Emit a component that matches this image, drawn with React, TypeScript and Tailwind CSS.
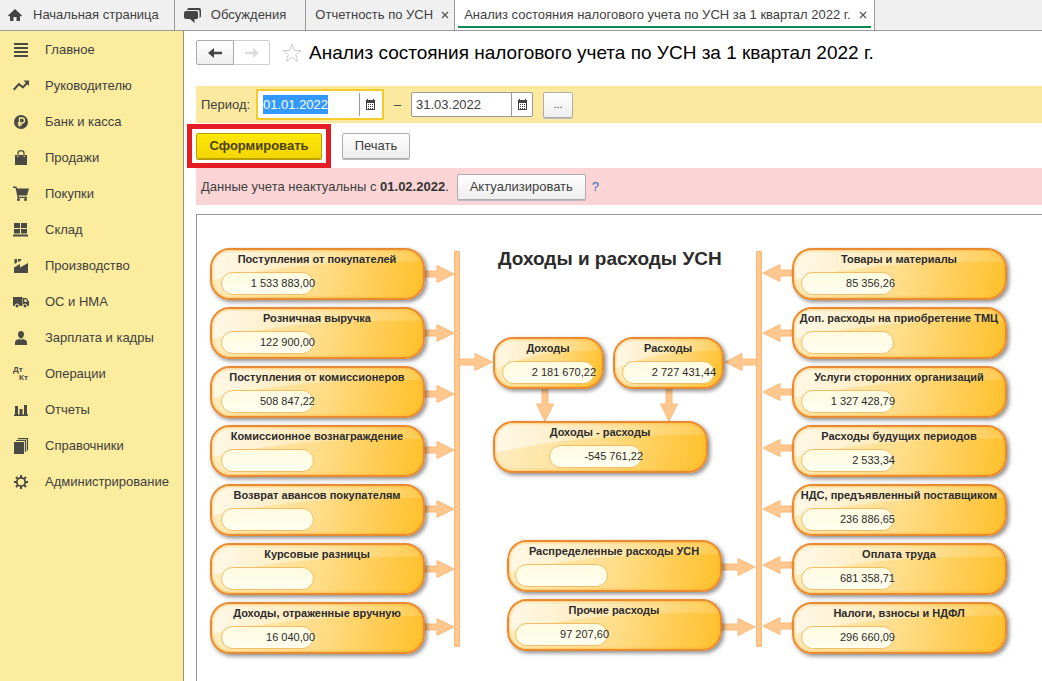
import { useEffect, useRef, type ReactNode } from 'react';

const menu: { label: string; icon: ReactNode }[] = [
    { label: 'Главное', icon: <path d="M1 1h14v2H1zM1 5h14v2H1zM1 9h14v2H1zM1 13h14v2H1z" /> },
    { label: 'Руководителю', icon: <path d="M10.500 2.500H16V8l-1.700-1.700-4.300 4.500L6 7.500 1.500 12.500 0 11l5.800-6.300L10 8l2.700-3.200z" /> },
    {
        label: 'Банк и касса',
        icon: (
            <>
                <circle cx="8" cy="8" r="7" />
                <path d="M6.500 12.500V4h2.500a2.300 2.300 0 0 1 0 5H4.800M4.800 10.800H9" fill="none" stroke="#fbec9e" strokeWidth="1.300" />
            </>
        ),
    },
    {
        label: 'Продажи',
        icon: (
            <>
                <path d="M2 5h2v2h1.500v-2h5v2H12v-2h2V15H2z" />
                <path d="M5 6.500V3Q5 .6 8 .6T11 3v3.500" fill="none" stroke="currentColor" strokeWidth="1.200" />
            </>
        ),
    },
    {
        label: 'Покупки',
        icon: (
            <>
                <path d="M0 .5h3.500l.6 2H16l-2 7H5.500l.3 1.300H14V12H4.600L2.600 2H0z" />
                <circle cx="5.500" cy="13.500" r="1.500" />
                <circle cx="12.500" cy="13.500" r="1.500" />
            </>
        ),
    },
    { label: 'Склад', icon: <path d="M1 1h6v5H1zM8 1h6v5H8zM1 7h6v4.500H1zM8 7h6v4.500H8zM0 12.500h15v2H0z" /> },
    { label: 'Производство', icon: <path d="M1 9.500l6-3.500V9.500L15 5v10H1zM1.500 1H4v3.500L1.500 6zM5 1h3.500l-1 2L5 4z" /> },
    {
        label: 'ОС и НМА',
        icon: (
            <>
                <path d="M0 3h9.500v9H0zM10 4h3.500L16 7.500V12h-6z" />
                <path d="M11.300 5.300h1.700l1.500 2.400h-3.200z" fill="#fbec9e" />
                <circle cx="4" cy="12" r="2" stroke="#fbec9e" />
                <circle cx="12" cy="12" r="2" stroke="#fbec9e" />
            </>
        ),
    },
    { label: 'Зарплата и кадры', icon: <path d="M8 1c2 0 3 1.400 3 3.200S9.700 8.500 8 8.500 5 6 5 4.200 6 1 8 1zM2 15v-2.500C2 10 4.500 9.500 6 9q2 1.500 4 0c1.500.5 4 1 4 3.500V15z" /> },
    {
        label: 'Операции',
        icon: (
            <g fontFamily="Liberation Sans, sans-serif" fontWeight="700" fontSize="8">
                <text x="0" y="6">Дт</text>
                <text x="6" y="14">Кт</text>
            </g>
        ),
    },
    { label: 'Отчеты', icon: <path d="M1 12.500h14V14H1zM2 4h3v9H2zM6.500 7h3v6h-3zM11 3h3v10h-3z" /> },
    {
        label: 'Справочники',
        icon: (
            <>
                <path d="M1 4h10v12H1z" />
                <path d="M3 2.500h9.500V14M5 .6h9.500V12.500" fill="none" stroke="currentColor" strokeWidth="1.200" />
            </>
        ),
    },
    {
        label: 'Администрирование',
        icon: (
            <>
                <circle cx="8" cy="8" r="4.200" fill="none" stroke="currentColor" strokeWidth="1.800" />
                <path d="M8 1v3M8 12v3M1 8h3M12 8h3M3 3l2 2M11 11l2 2M13 3l-2 2M5 11l-2 2" stroke="currentColor" strokeWidth="2" />
            </>
        ),
    },
];

type NodeData = { title: string; value?: string; x: number; y: number; w?: number; pill?: number };

const income: [string, string?][] = [
    ['Поступления от покупателей', '1 533 883,00'],
    ['Розничная выручка', '122 900,00'],
    ['Поступления от комиссионеров', '508 847,22'],
    ['Комиссионное вознаграждение'],
    ['Возврат авансов покупателям'],
    ['Курсовые разницы'],
    ['Доходы, отраженные вручную', '16 040,00'],
];

const expenses: [string, string?][] = [
    ['Товары и материалы', '85 356,26'],
    ['Доп. расходы на приобретение ТМЦ'],
    ['Услуги сторонних организаций', '1 327 428,79'],
    ['Расходы будущих периодов', '2 533,34'],
    ['НДС, предъявленный поставщиком', '236 886,65'],
    ['Оплата труда', '681 358,71'],
    ['Налоги, взносы и НДФЛ', '296 660,09'],
];

const nodes: NodeData[] = [
    ...income.map(([title, value], i) => ({ title, value, x: 13, y: 33 + 59 * i })),
    ...expenses.map(([title, value], i) => ({ title, value, x: 595, y: 33 + 59 * i, pill: 7 })),
    { title: 'Доходы', value: '2 181 670,22', x: 296, y: 122, w: 111, pill: 7 },
    { title: 'Расходы', value: '2 727 431,44', x: 416, y: 122, w: 111, pill: 7 },
    { title: 'Доходы - расходы', value: '-545 761,22', x: 296, y: 206, pill: 54 },
    { title: 'Распределенные расходы УСН', x: 310, y: 325, pill: 6 },
    { title: 'Прочие расходы', value: '97 207,60', x: 310, y: 384, pill: 6 },
];

// [x, y, length, angle]
const arrows: number[][] = [
    ...[59, 118, 179, 235, 294, 354, 412].map((y) => [228, y, 30, 0]),
    ...[58, 118, 177, 233, 294, 350, 411].map((y) => [595, y, 30, 180]),
    [263, 147, 33, 0],
    [559, 147, 32, 180],
    [348, 173, 34, 90],
    [472, 173, 34, 90],
    [525, 352, 34, 0],
    [525, 412, 34, 0],
];

function CalendarIcon() {
    return (
        <svg viewBox="0 0 11 11" className="size-[11px]" fill="#444">
            <path d="M1 1h1V0h1v1h5V0h1v1h1v10H1zM2 4v6h7V4z" fillRule="evenodd" />
            <path d="M3 5h1v1H3zM5 5h1v1H5zM7 5h1v1H7zM3 7h1v1H3zM5 7h1v1H5zM7 7h1v1H7zM3 9h1v1H3zM5 9h1v1H5zM7 9h1v1H7z" />
        </svg>
    );
}

function Tab({ children, active, closable }: { children: ReactNode; active?: boolean; closable?: boolean }) {
    return (
        <div className={`flex shrink-0 border-r border-[#999] px-[3px] ${active ? 'bg-white' : ''}`}>
            <div className={`flex items-center gap-2 pl-[6px] ${active ? 'mb-[2px] border-b-2 border-[#12894f] pt-1 pr-1' : 'pr-[2px]'}`}>
                <a href="#" className="flex items-center whitespace-nowrap">{children}</a>
                {closable && (
                    <button aria-label="Закрыть" className="text-[#555]">
                        <svg viewBox="0 0 8 8" className="size-2" stroke="currentColor" strokeWidth="1.200">
                            <path d="M1 1l6 6M7 1L1 7" />
                        </svg>
                    </button>
                )}
            </div>
        </div>
    );
}

function FlowNode({ title, value, x, y, w = 215, pill = 9 }: NodeData) {
    return (
        <div
            className="absolute h-[52px] overflow-hidden rounded-[20px] border-2 border-[#e98a30] bg-linear-[100deg] from-[#ffeec4] via-[#ffdd8a] to-[#ffc02a] shadow-[2px_2px_4px_#0007]"
            style={{ left: x, top: y, width: w }}
        >
            <svg viewBox="0 0 100 48" preserveAspectRatio="none" className="absolute inset-0 size-full" fill="url(#gloss)">
                <path d="M0 0H100V12Q40 10 0 30z" />
            </svg>
            <div className="absolute inset-0 rounded-[18px] shadow-[inset_0_0_3px_#ffa91f]" />
            <div className="relative -mx-2 mt-px pr-px text-center text-[11px] leading-4 font-bold whitespace-nowrap">{title}</div>
            <div
                className="relative mt-[5px] flex h-[23px] w-[93px] items-center justify-end rounded-full border border-[#f0bd62] bg-linear-to-b from-[#fffbe0] to-[#fffff0] text-[11px] whitespace-nowrap"
                style={{ marginLeft: pill }}
            >
                <span className="-mr-[2px]">{value}</span>
            </div>
        </div>
    );
}

function Diagram() {
    return (
        <div className="relative min-h-[450px] flex-1 overflow-hidden border-t border-l border-[#999] text-[#2b2b2b]">
            <svg width="845" height="450" className="absolute top-0 left-0" fill="#ffc88f" stroke="#fdb878" strokeWidth="1">
                <defs>
                    <linearGradient id="gloss">
                        <stop offset="0" stopColor="#fff" stopOpacity=".6" />
                        <stop offset=".6" stopColor="#fff" stopOpacity=".25" />
                        <stop offset="1" stopColor="#fff" stopOpacity=".15" />
                    </linearGradient>
                </defs>
                <path d="M257.500 36.500h5v395h-5zM559.500 36.500h5v395h-5z" />
                {arrows.map(([x, y, len, angle]) => (
                    <path
                        key={`${x}-${y}`}
                        transform={`translate(${x} ${y}) rotate(${angle})`}
                        d={`M0 -3H${len - 18}V-8.500L${len - 1} 0L${len - 18} 8.500V3H0z`}
                    />
                ))}
            </svg>
            <h2 className="absolute top-8 left-[301px] text-[19px] leading-6 font-bold whitespace-nowrap">Доходы и расходы УСН</h2>
            {nodes.map((n) => (
                <FlowNode key={n.title} {...n} />
            ))}
        </div>
    );
}

const button = 'h-[26px] rounded-[2px] border border-[#adadad] bg-linear-to-b from-white to-[#eee] shadow-[0_1px_0_#bbb]';

export default function App() {
    const startRef = useRef<HTMLInputElement>(null);

    useEffect(() => {
        startRef.current?.focus();
        startRef.current?.select();
    }, []);

    return (
        <div className="flex min-h-screen flex-col overflow-hidden bg-white font-['Liberation_Sans',Arial,sans-serif] text-[13px] text-[#404040]">
            <nav className="flex h-[31px] border-b border-[#999] bg-[#f0f0f0]">
                <Tab>
                    <svg viewBox="0 0 14 12" className="-ml-px mr-[11px] h-3 w-[14px]" fill="#444">
                        <path d="M7 0l7 6.500-1 1-1-.8V12H8.500V8h-3v4H2V6.700l-1 .8-1-1z" />
                    </svg>
                    <span className="pr-[10px]">Начальная страница</span>
                </Tab>
                <Tab>
                    <svg viewBox="0 0 17 15" className="mr-[10px] h-[15px] w-[17px]" fill="#444">
                        <path d="M5 0h10q2 0 2 2v6q0 1.500-1.500 2V3.500q0-1.500-1.500-1.500H3q.3-2 2-2z" />
                        <path d="M2 3h10.500q1.500 0 1.500 1.500V9.500q0 1.500-1.500 1.500h-2v4L6 11H2Q0 11 0 9V5q0-2 2-2z" />
                    </svg>
                    <span className="pr-[14px]">Обсуждения</span>
                </Tab>
                <Tab closable>Отчетность по УСН</Tab>
                <Tab closable active>Анализ состояния налогового учета по УСН за 1 квартал 2022 г.</Tab>
            </nav>

            <div className="flex flex-1">
                <aside className="w-[184px] shrink-0 border-r border-[#958f70] bg-[#fbec9e] pt-px">
                    {menu.map((m) => (
                        <a key={m.label} href="#" className="flex h-9 items-center gap-4 pl-[13px]">
                            <svg viewBox="0 0 16 16" className="size-4 overflow-visible text-[#4a4a45]" fill="currentColor">{m.icon}</svg>
                            {m.label}
                        </a>
                    ))}
                </aside>

                <main className="flex min-w-0 flex-1 flex-col pl-3">
                    <div className="flex h-[55px] items-center pb-3">
                        <div className="flex">
                            <button aria-label="Назад" className="flex h-[25px] w-[38px] items-center justify-center rounded-l-[2px] border border-[#aaa] bg-linear-to-b from-white to-[#eee]">
                                <svg viewBox="0 0 14 10" className="h-[10px] w-[14px]" fill="#444"><path d="M0 5l6-5v3.700h8v2.600H6V10z" /></svg>
                            </button>
                            <button aria-label="Вперед" className="flex h-[25px] w-9 items-center justify-center rounded-r-[2px] border border-l-0 border-[#d0d0d0] bg-white">
                                <svg viewBox="0 0 14 10" className="h-[10px] w-[14px]" fill="#ddd"><path d="M14 5L8 0v3.700H0v2.600h8V10z" /></svg>
                            </button>
                        </div>
                        <button aria-label="В избранное" className="mr-[7px] ml-3">
                            <svg viewBox="0 0 20 20" className="size-5" fill="none" stroke="#ccc"><path d="M10 1l2.300 6.500H19L13.700 11.600 15.600 18.500 10 14.400 4.400 18.500 6.300 11.600 1 7.500H7.700z" /></svg>
                        </button>
                        <h1 className="pt-px text-[19px] whitespace-nowrap text-black">Анализ состояния налогового учета по УСН за 1 квартал 2022 г.</h1>
                    </div>

                    <div className="flex h-[37px] items-center bg-[#fce9a0] pl-[5px]">
                        <label htmlFor="from" className="w-[55px]">Период:</label>
                        <div className="flex h-[31px] w-[128px] border-2 border-[#f5cb2b] bg-white p-[2px]">
                            <input id="from" ref={startRef} defaultValue="01.01.2022" className="w-[99px] pl-[3px] outline-none selection:bg-[#3399ff] selection:text-white" />
                            <button aria-label="Выбрать дату начала" className="flex flex-1 items-center justify-center border-l border-[#999]"><CalendarIcon /></button>
                        </div>
                        <span className="w-[27px] text-center">–</span>
                        <div className="flex h-[25px] w-[122px] rounded-[2px] border border-[#999] bg-white">
                            <input aria-label="Конец периода" defaultValue="31.03.2022" className="w-[99px] pl-1 outline-none" />
                            <button aria-label="Выбрать дату окончания" className="flex flex-1 items-center justify-center border-l border-[#999]"><CalendarIcon /></button>
                        </div>
                        <button className={`${button} ml-[10px] w-[30px] text-[11px]`}>...</button>
                    </div>

                    <div className="flex h-[45px] items-center gap-5">
                        <div className="relative">
                            <button className="h-[26px] w-[126px] rounded-[2px] border border-[#b9a000] bg-linear-to-b from-[#ffe70a] to-[#f3d600] text-[13px] font-bold text-[#4c4000] shadow-[0_1px_0_#b9a000]">Сформировать</button>
                            <div className="pointer-events-none absolute -inset-[9px] border-5 border-[#e61c24]" />
                        </div>
                        <button className={`${button} w-[68px]`}>Печать</button>
                    </div>

                    <div className="mb-[9px] flex h-[37px] items-center bg-[#fbd5d5] pl-[5px]">
                        <span>Данные учета неактуальны с <b className="text-[#333]">01.02.2022</b>.</span>
                        <button className={`${button} mr-[6px] ml-2 w-[129px]`}>Актуализировать</button>
                        <a href="#" className="text-[#2a6fc0]">?</a>
                    </div>

                    <Diagram />
                </main>
            </div>
        </div>
    );
}
